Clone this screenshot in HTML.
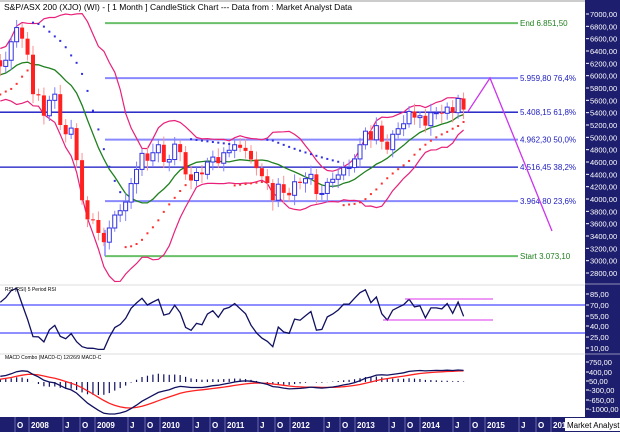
<!DOCTYPE html>
<html><head><meta charset="utf-8">
<style>
html,body{margin:0;padding:0;background:#fff;width:620px;height:432px;overflow:hidden}
svg{display:block;font-family:"Liberation Sans",sans-serif}
</style></head><body>
<svg id="s" width="620" height="432" xmlns="http://www.w3.org/2000/svg">
<rect width="620" height="432" fill="#fff"/>
<line x1="0" y1="1" x2="585" y2="1" stroke="#999"/>
<rect x="585" y="0" width="35" height="432" fill="#1e1e6e"/>
<rect x="0" y="417" width="620" height="15" fill="#1e1e6e"/>
<g id="g"></g>
<text x="4" y="10" font-size="8.5" fill="#000">S&amp;P/ASX 200 (XJO) (WI) -  [ 1 Month ] CandleStick Chart --- Data from : Market Analyst Data</text>
</svg>
<script>
var g=document.getElementById('g'),h='';
function Y(p){return 14+(7000-p)*0.06167;}
var fl=[[6851.5,'#6abf6a','End 6.851,50',2],[5959.8,'#8888ff','5.959,80 76,4%',2],[5408.15,'#1010c0','5.408,15 61,8%',1.3],[4962.3,'#8888ff','4.962,30 50,0%',2],[4516.45,'#1010c0','4.516,45 38,2%',1.3],[3964.8,'#8888ff','3.964,80 23,6%',2],[3073.1,'#6abf6a','Start 3.073,10',2]];
fl.forEach(function(f){var y=Y(f[0]);var x0=f[0]==5408.15||f[0]==4516.45?0:105;
h+='<line x1="'+x0+'" y1="'+y+'" x2="518" y2="'+y+'" stroke="'+f[1]+'" stroke-width="'+f[3]+'"/>';
h+='<text x="520" y="'+(y+3)+'" font-size="8" fill="'+(f[1]=='#6abf6a'?'#208020':'#2020c0')+'">'+f[2]+'</text>';});
h+='<line x1="105" y1="'+Y(3073.1)+'" x2="105" y2="'+Y(3500)+'" stroke="#8888ff" stroke-width="1.5"/>';
var c=[5700,5750,5900,6100,6250,6250,6150,6250,6550,6780,6600,6340,
5700,5680,5350,5600,5700,5200,5050,5150,4630,3980,3670,3660,
3450,3300,3530,3740,3810,3950,4250,4480,4740,4620,4750,4880,
4600,4640,4890,4760,4400,4300,4430,4400,4600,4680,4580,4750,
4790,4880,4830,4780,4640,4500,4370,4260,3980,4240,4100,4060,
4280,4260,4330,4400,4080,4090,4270,4320,4390,4510,4510,4650,
4880,5100,4960,5190,4930,4800,5050,5140,5220,5420,5320,5350,
5190,5400,5400,5390,5490,5400,5630,5450];
var N=c.length;
function X(i){return 33+(i-12)*5.45;}
var P=13,ma=[],up=[],lo=[];
for(var i=0;i<N;i++){var s=0,k=0;for(var j=Math.max(0,i-P+1);j<=i;j++){s+=c[j];k++;}var m=s/k,v=0;for(j=Math.max(0,i-P+1);j<=i;j++)v+=(c[j]-m)*(c[j]-m);var sd=Math.sqrt(v/k);ma.push(m);up.push(m+2*sd);lo.push(m-2*sd);}
function pl(a,col,w){var d='';for(var i=6;i<N;i++)d+=(i==6?'M':'L')+X(i).toFixed(1)+','+Y(a[i]).toFixed(1);h+='<path d="'+d+'" fill="none" stroke="'+col+'" stroke-width="'+w+'"/>';}
pl(up,'#e8207a',1.2);pl(lo,'#e8207a',1.2);pl(ma,'#208020',1.3);
for(var i=6;i<N;i++){var o=c[i-1],cl=c[i],x=X(i),hi=Math.max(o,cl)+60+(i*37%90),lw=Math.min(o,cl)-60-(i*53%110);var bull=cl>=o;var col=bull?'#3030e0':'#ff2020';var wc=bull?'#8080ff':'#ff9090';
h+='<line x1="'+x+'" y1="'+Y(hi)+'" x2="'+x+'" y2="'+Y(lw)+'" stroke="'+wc+'" stroke-width="1"/>';
var t=Y(Math.max(o,cl)),b=Y(Math.min(o,cl));if(b-t<1)b=t+1;
h+='<rect x="'+(x-2)+'" y="'+t+'" width="4" height="'+(b-t)+'" fill="'+(bull?'#fff':'#ff2020')+'" stroke="'+col+'" stroke-width="'+(bull?1:0)+'"/>';}
var tr=1,sar=c[0]-100,ep=c[0],af=.02;
for(var i=1;i<N;i++){sar=sar+af*(ep-sar);if(tr==1){if(c[i]<sar){tr=-1;sar=ep;ep=c[i];af=.02;}else if(c[i]>ep){ep=c[i];af=Math.min(.2,af+.02);}}else{if(c[i]>sar){tr=1;sar=ep;ep=c[i];af=.02;}else if(c[i]<ep){ep=c[i];af=Math.min(.2,af+.02);}}
if(i>=6){var sv=tr==1?sar-80:sar+80;h+='<rect x="'+(X(i)-1)+'" y="'+(Y(sv)-1)+'" width="2" height="2" fill="'+(tr==1?'#ff3030':'#3030e0')+'"/>';}}
var lx=X(N-1);h+='<polyline points="'+(lx+4)+','+Y(5408)+' 490,78 552,231" fill="none" stroke="#cc33ee" stroke-width="1.3"/>';
h+='<line x1="0" y1="285" x2="585" y2="285" stroke="#bbb" stroke-width="0.5"/>';
h+='<line x1="0" y1="305" x2="585" y2="305" stroke="#6a6aff" stroke-width="1.5"/><line x1="0" y1="333" x2="585" y2="333" stroke="#6a6aff" stroke-width="1.5"/>';
var ag=0,al=0,rs=[];for(var i=1;i<N;i++){var d=c[i]-c[i-1];ag=(ag*4+Math.max(d,0))/5;al=(al*4+Math.max(-d,0))/5;rs[i]=al==0?90:100-100/(1+ag/al);}
var d='';for(var i=6;i<N;i++){var v=Math.max(8,Math.min(97,rs[i]));d+=(i==6?'M':'L')+X(i).toFixed(1)+','+(294+(85-v)*0.72).toFixed(1);}
h+='<path d="'+d+'" fill="none" stroke="#101060" stroke-width="1.3"/>';
h+='<line x1="405" y1="299" x2="493" y2="299" stroke="#dd33ee"/><line x1="383" y1="320" x2="493" y2="320" stroke="#dd33ee"/>';
h+='<text x="5" y="291" font-size="5" fill="#000">RSI (RSI) 5 Period RSI</text>';
h+='<line x1="0" y1="354" x2="585" y2="354" stroke="#bbb" stroke-width="0.5"/>';
var e1=c[0],e2=c[0],sg=0,mc=[],sgl=[];for(var i=0;i<N;i++){e1+=(c[i]-e1)*2/13;e2+=(c[i]-e2)*2/27;var m=e1-e2;sg+=(m-sg)*0.2;mc.push(m);sgl.push(sg);}
function MY(v){return Math.max(358,Math.min(414,382-v*0.05));}
for(var i=6;i<N;i++){var hv=(mc[i]-sgl[i])*1.0;h+='<line x1="'+X(i)+'" y1="382" x2="'+X(i)+'" y2="'+(MY(hv))+'" stroke="#101060" stroke-width="1.2"/>';}
function ml(a,col){var d='';for(var i=6;i<N;i++)d+=(i==6?'M':'L')+X(i).toFixed(1)+','+MY(a[i]).toFixed(1);h+='<path d="'+d+'" fill="none" stroke="'+col+'" stroke-width="1.3"/>';}
ml(sgl,'#ff2020');ml(mc,'#101060');
h+='<text x="5" y="359" font-size="5" fill="#000">MACD Combo (MACD-C) 12/26/9 MACD-C</text>';
[7000,6800,6600,6400,6200,6000,5800,5600,5400,5200,5000,4800,4600,4400,4200,4000,3800,3600,3400,3200,3000,2800].forEach(function(a){var y=Y(a);h+='<line x1="586" y1="'+y+'" x2="589" y2="'+y+'" stroke="#fff"/><text x="590" y="'+(y+3)+'" font-size="7.5" fill="#fff">'+a+',00</text>';});
h+='<line x1="585" y1="284" x2="620" y2="284" stroke="#fff" stroke-width="0.5"/><line x1="585" y1="354" x2="620" y2="354" stroke="#fff" stroke-width="0.5"/>';
[['85,00',294],['70,00',305],['55,00',316],['40,00',326],['25,00',337],['10,00',348]].forEach(function(a){h+='<line x1="586" y1="'+a[1]+'" x2="589" y2="'+a[1]+'" stroke="#fff"/><text x="590" y="'+(a[1]+3)+'" font-size="7.5" fill="#fff">'+a[0]+'</text>';});
[['750,00',362],['400,00',372],['50,00',381],['-300,00',390],['-650,00',400],['-1000,00',409]].forEach(function(a){h+='<line x1="586" y1="'+a[1]+'" x2="589" y2="'+a[1]+'" stroke="#fff"/><text x="589" y="'+(a[1]+3)+'" font-size="7.5" fill="#fff">'+a[0]+'</text>';});
var bl=[['O',17],['2008',31],['J',65],['O',82],['2009',97],['J',130],['O',147],['2010',162],['J',195],['O',212],['2011',227],['J',260],['O',277],['2012',292],['J',326],['O',342],['2013',357],['J',391],['O',407],['2014',422],['J',455],['O',472],['2015',487],['J',521],['O',538],['201',553]];
bl.forEach(function(a){h+='<line x1="'+(a[1]-2)+'" y1="417" x2="'+(a[1]-2)+'" y2="432" stroke="#8888cc" stroke-width="0.7"/><text x="'+a[1]+'" y="428" font-size="8" font-weight="bold" fill="#fff">'+a[0]+'</text>';});
h+='<rect x="565" y="418" width="55" height="13" fill="#fff"/><text x="567" y="428" font-size="8" fill="#000">Market Analyst 6</text>';
g.innerHTML=h;
</script>
</body></html>
